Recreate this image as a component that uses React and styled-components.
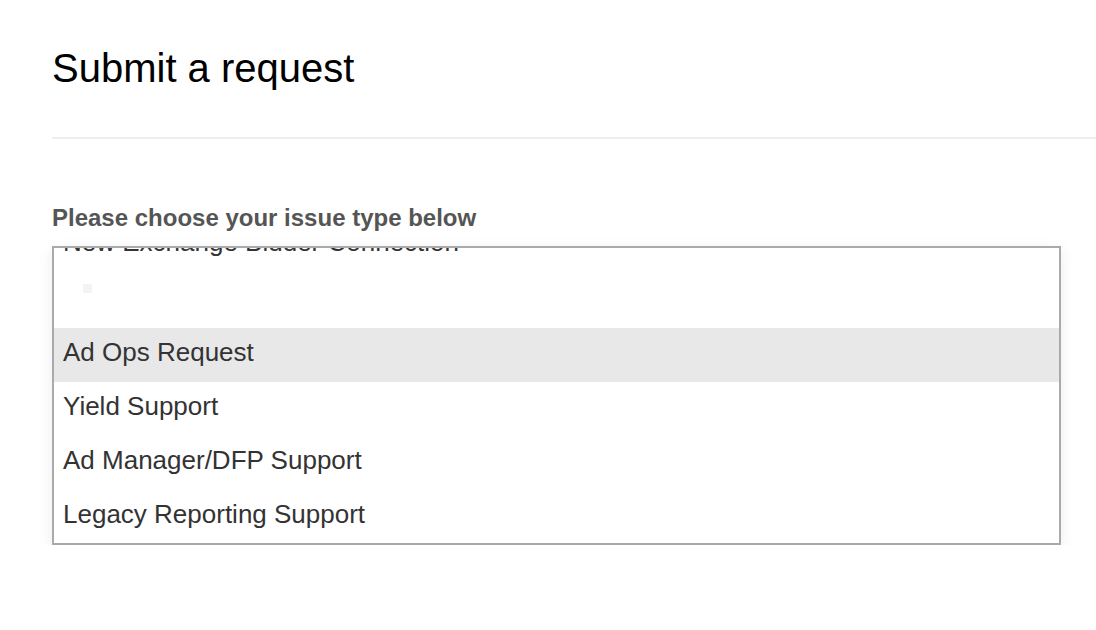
import styled, { createGlobalStyle } from 'styled-components'

const GlobalStyle = createGlobalStyle`
   body {
      margin: 0;
      background: #fff;
      font-family: "Liberation Sans", Arial, sans-serif;
   }
`

const Page = styled.div`
   padding: 40px 0 0 52px;
`

const Title = styled.h1`
   margin: 0;
   font-size: 40px;
   font-weight: 400;
   line-height: 56px;
   color: #000;
`

const Divider = styled.hr`
   margin: 41px 0 0;
   border: 0;
   height: 2px;
   background: #eeeeee;
`

const Label = styled.div`
   margin-top: 66px;
   font-size: 24px;
   font-weight: 700;
   line-height: 26px;
   color: #555;
`

// сам выпадающий список, прокручен немного вниз
const ListBox = styled.div`
   margin-top: 15px;
   width: 1009px;
   height: 299px;
   box-sizing: border-box;
   border: 2px solid #aaaaaa;
   background: #fff;
   box-shadow: 0 4px 14px rgba(0, 0, 0, 0.08);
   overflow: hidden;
`

const Scroller = styled.div`
   margin-top: -30px;
`

const Option = styled.div`
   height: ${props => props.h || 54}px;
   box-sizing: border-box;
   display: flex;
   align-items: center;
   padding: 0 0 6px 9px;
   font-size: 26px;
   color: #333;
   background: ${props => (props.active ? '#e8e8e8' : 'transparent')};
`

const Placeholder = styled.span`
   width: 9px;
   height: 9px;
   margin: -18px 0 0 20px;
   background: #f3f3f3;
`

const options = ['Ad Ops Request', 'Yield Support', 'Ad Manager/DFP Support', 'Legacy Reporting Support']

export default function App() {
   return (
      <>
         <GlobalStyle />
         <Page>
            <Title>Submit a request</Title>
            <Divider />
            <Label>Please choose your issue type below</Label>
            <ListBox>
               <Scroller>
                  <Option>New Exchange Bidder Connection</Option>
                  <Option h={56}>
                     <Placeholder />
                  </Option>
                  {options.map((o, i) => (
                     <Option key={o} active={i === 0}>
                        {o}
                     </Option>
                  ))}
               </Scroller>
            </ListBox>
         </Page>
      </>
   )
}
